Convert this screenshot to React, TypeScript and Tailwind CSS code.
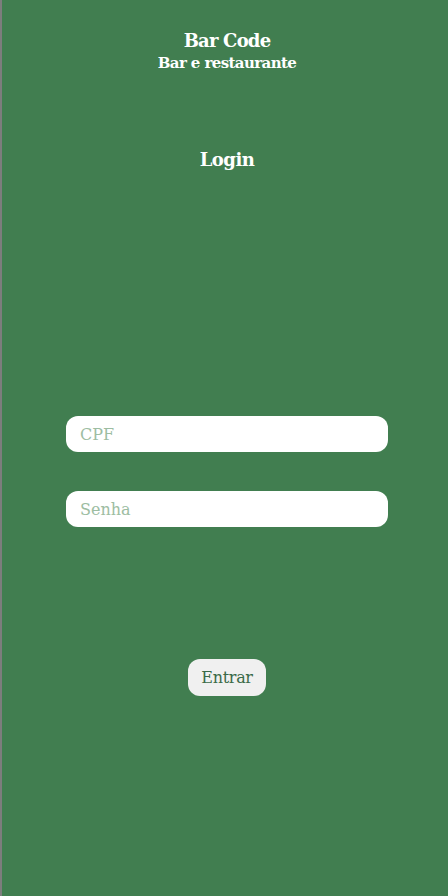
function App() {
  return (
    <div className="min-h-[896px] w-full flex bg-[#417e50] border-l-2 border-[#7d7d7d]" style={{ fontFamily: '"DejaVu Serif", "Liberation Serif", serif' }}>
      <div className="flex-1 pl-[4px] flex flex-col items-center">
        <div className="mt-[29px] flex flex-col items-center text-white font-bold">
          <h1 className="text-[18px] leading-[24px] tracking-[-0.8px]">Bar Code</h1>
          <h2 className="text-[15px] leading-[20px] tracking-[-0.6px]">Bar e restaurante</h2>
        </div>
        <h2 className="mt-[75px] text-white font-bold text-[18px] leading-[24px] tracking-[-0.5px]">Login</h2>
        <form className="mt-[244px] flex flex-col items-center gap-[39px]">
          <input
            type="text"
            placeholder="CPF"
            className="w-[322px] h-[36px] rounded-[12px] bg-white px-[14px] text-[16px] text-[#2f5f3f] placeholder:text-[#9dbda2] outline-none"
          />
          <input
            type="password"
            placeholder="Senha"
            className="w-[322px] h-[36px] rounded-[12px] bg-white px-[14px] text-[16px] text-[#2f5f3f] placeholder:text-[#9dbda2] outline-none"
          />
        </form>
        <button className="mt-[132px] w-[78px] h-[37px] rounded-[12px] bg-[#f0f0f0] text-[#3a6a48] text-[16px] tracking-[-0.3px]">
          Entrar
        </button>
      </div>
    </div>
  );
}
export default App;
